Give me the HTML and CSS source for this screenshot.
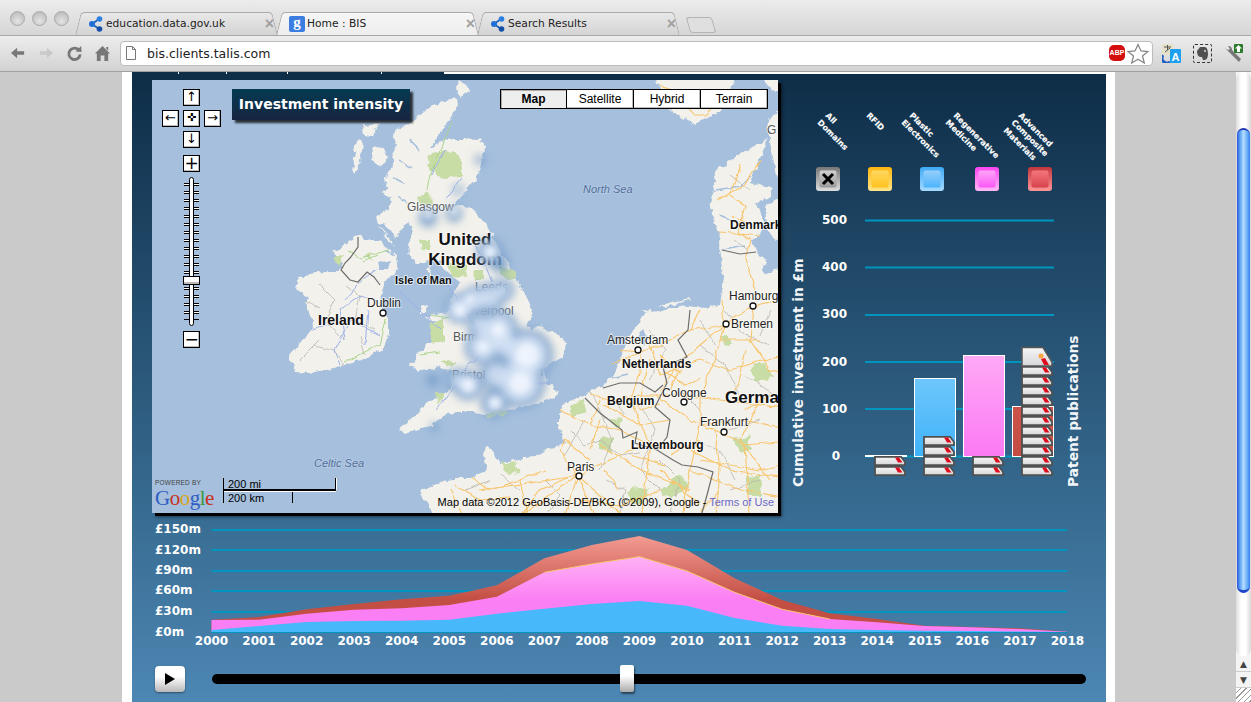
FILE: index.html
```html
<!DOCTYPE html>
<html lang="en">
<head>
<meta charset="utf-8">
<title>Home : BIS</title>
<link rel="stylesheet" href="styles.css">
</head>
<body>
<svg class="defs" width="0" height="0" aria-hidden="true">
  <defs>
    <symbol id="net" viewBox="0 0 16 16">
      <path d="M4 8 L11 3 M4 8 L11 13" stroke="#1a5fc0" stroke-width="1.6" fill="none"/>
      <circle cx="4" cy="8" r="3" fill="#1f6fd6"/><circle cx="11.5" cy="3" r="2.8" fill="#2a7fe0"/><circle cx="11.5" cy="13" r="2.8" fill="#1450a8"/>
    </symbol>
    <linearGradient id="pieceFill" x1="0" y1="0" x2="0" y2="1"><stop offset="0" stop-color="#f6f6f6"/><stop offset="1" stop-color="#d6d6da"/></linearGradient>
    <linearGradient id="blueBar" x1="0" y1="0" x2="0" y2="1"><stop offset="0" stop-color="#6ec6fb"/><stop offset="1" stop-color="#3fb3f9"/></linearGradient>
    <linearGradient id="pinkBar" x1="0" y1="0" x2="0" y2="1"><stop offset="0" stop-color="#ffa9f6"/><stop offset="1" stop-color="#fb7af3"/></linearGradient>
    <linearGradient id="redBar" x1="0" y1="0" x2="0" y2="1"><stop offset="0" stop-color="#cc534a"/><stop offset="1" stop-color="#c24c44"/></linearGradient>
    <linearGradient id="grayO" x1="0" y1="0" x2="0" y2="1"><stop offset="0" stop-color="#777"/><stop offset="1" stop-color="#ddd"/></linearGradient>
    <linearGradient id="grayI" x1="0" y1="0" x2="0" y2="1"><stop offset="0" stop-color="#d0d0d0"/><stop offset="1" stop-color="#999"/></linearGradient>
    <linearGradient id="yelO" x1="0" y1="0" x2="0" y2="1"><stop offset="0" stop-color="#fdb510"/><stop offset="1" stop-color="#ffe58a"/></linearGradient>
    <linearGradient id="yelI" x1="0" y1="0" x2="0" y2="1"><stop offset="0" stop-color="#ffd860"/><stop offset="1" stop-color="#ffc21f"/></linearGradient>
    <linearGradient id="bluO" x1="0" y1="0" x2="0" y2="1"><stop offset="0" stop-color="#3ea9f4"/><stop offset="1" stop-color="#a6daff"/></linearGradient>
    <linearGradient id="bluI" x1="0" y1="0" x2="0" y2="1"><stop offset="0" stop-color="#94cffb"/><stop offset="1" stop-color="#4db4fc"/></linearGradient>
    <linearGradient id="pnkO" x1="0" y1="0" x2="0" y2="1"><stop offset="0" stop-color="#fb45f0"/><stop offset="1" stop-color="#ffb8f6"/></linearGradient>
    <linearGradient id="pnkI" x1="0" y1="0" x2="0" y2="1"><stop offset="0" stop-color="#ffa4f8"/><stop offset="1" stop-color="#fb58f5"/></linearGradient>
    <linearGradient id="redO" x1="0" y1="0" x2="0" y2="1"><stop offset="0" stop-color="#c4343c"/><stop offset="1" stop-color="#fb9599"/></linearGradient>
    <linearGradient id="redI" x1="0" y1="0" x2="0" y2="1"><stop offset="0" stop-color="#f3767d"/><stop offset="1" stop-color="#d8434c"/></linearGradient>
    <linearGradient id="areaRed" gradientUnits="userSpaceOnUse" x1="0" y1="536" x2="0" y2="600"><stop offset="0" stop-color="#f39b92"/><stop offset="1" stop-color="#c34e43"/></linearGradient>
    <linearGradient id="areaPink" gradientUnits="userSpaceOnUse" x1="0" y1="556" x2="0" y2="600"><stop offset="0" stop-color="#ffb2f6"/><stop offset="1" stop-color="#fb7ff4"/></linearGradient>
    <symbol id="piece" viewBox="0 0 32 10">
      <path d="M1 .8 H27 L31 6 V9.200 H1 Z" fill="url(#pieceFill)" stroke="#505050" stroke-width="1.800"/>
      <path d="M21 1.500 H25 L28.500 6.500 H24 Z" fill="#e00d1e"/>
    </symbol>
    <filter id="rough" filterUnits="userSpaceOnUse" x="130" y="60" width="680" height="480">
      <feTurbulence type="fractalNoise" baseFrequency="0.14" numOctaves="3" seed="7"/>
      <feDisplacementMap in="SourceGraphic" scale="7" xChannelSelector="R" yChannelSelector="G"/>
    </filter>
    <filter id="wiggle" filterUnits="userSpaceOnUse" x="130" y="60" width="680" height="480">
      <feTurbulence type="fractalNoise" baseFrequency="0.09" numOctaves="2" seed="3"/>
      <feDisplacementMap in="SourceGraphic" scale="5" xChannelSelector="R" yChannelSelector="G"/>
    </filter>
    <filter id="softGreen" filterUnits="userSpaceOnUse" x="130" y="60" width="680" height="480">
      <feTurbulence type="fractalNoise" baseFrequency="0.1" numOctaves="3" seed="11"/>
      <feDisplacementMap in="SourceGraphic" scale="9" xChannelSelector="R" yChannelSelector="G"/>
      <feGaussianBlur stdDeviation=".5"/>
    </filter>
    <filter id="blurHalo" filterUnits="userSpaceOnUse" x="380" y="120" width="240" height="340"><feGaussianBlur stdDeviation="5"/></filter>
    <filter id="blurMid" filterUnits="userSpaceOnUse" x="380" y="120" width="240" height="340"><feGaussianBlur stdDeviation="4.500"/></filter>
    <filter id="blurCore" filterUnits="userSpaceOnUse" x="380" y="120" width="240" height="340"><feGaussianBlur stdDeviation="3"/></filter>
  </defs>
</svg>

<header class="tabstrip">
  <div class="lights"><i class="light"></i><i class="light"></i><i class="light"></i></div>
  <div class="tab">
    <svg class="favicon"><use href="#net"/></svg>
    <span class="tab-title">education.data.gov.uk</span><span class="tab-close">×</span>
  </div>
  <div class="tab tab-active">
    <span class="g-favicon">g</span>
    <span class="tab-title">Home : BIS</span><span class="tab-close">×</span>
  </div>
  <div class="tab">
    <svg class="favicon"><use href="#net"/></svg>
    <span class="tab-title">Search Results</span><span class="tab-close">×</span>
  </div>
  <div class="tab-new"></div>
</header>

<nav class="toolbar">
  <span class="tool"><svg width="16" height="14" viewBox="0 0 18 16"><path d="M1 8 L8 2 V6 H16 V10 H8 V14 Z" fill="#777"/></svg></span>
  <span class="tool"><svg width="16" height="14" viewBox="0 0 18 16"><path d="M17 8 L10 2 V6 H2 V10 H10 V14 Z" fill="#c9c9c9"/></svg></span>
  <span class="tool"><svg width="17" height="17" viewBox="0 0 18 18"><path d="M14 6 A6 6 0 1 0 15 10" fill="none" stroke="#777" stroke-width="3"/><path d="M10 7 L16.500 7.500 L16 1 Z" fill="#777"/></svg></span>
  <span class="tool"><svg width="17" height="17" viewBox="0 0 18 18"><path d="M9 1 L17 9 H15 V17 H11 V11 H7 V17 H3 V9 H1 Z M13 2 H15 V6 L13 4 Z" fill="#777"/></svg></span>
  <div class="omnibox">
    <svg width="10" height="14" viewBox="0 0 10 14"><path d="M.5 .5 H6.500 L9.500 3.500 V13.500 H.5 Z M6.500 .5 V3.500 H9.500" fill="#fff" stroke="#777"/></svg>
    <span class="url">bis.clients.talis.com</span>
    <span class="abp">ABP</span>
    <svg width="22" height="21" viewBox="0 0 22 21"><path d="M11 1.500 L14 8 L21 8.500 L15.500 13 L17.300 20 L11 16.300 L4.700 20 L6.500 13 L1 8.500 L8 8 Z" fill="#fff" stroke="#888" stroke-width="1.300"/></svg>
  </div>
  <div class="extensions">
    <svg width="19" height="19" viewBox="0 0 19 19"><rect x="0" y="0" width="11" height="11" fill="#e6e0c8"/><path d="M2 3 H9 M5.500 1 V6 M3 8 L8 4" stroke="#555" fill="none"/><path d="M1 11 A5 5 0 0 0 8 18" stroke="#1d5fc4" stroke-width="3" fill="none"/><rect x="8" y="5" width="11" height="14" rx="1" fill="#1fa0ee"/><text class="ext-a" x="13.500" y="16.500">A</text></svg>
    <span class="ever"><svg width="15" height="15" viewBox="0 0 15 15"><path d="M2 5 L5 1 H10 Q13 2 13 8 Q13 13 10 14 H8 L7 11 L5 11 Q2 10 2 5 Z" fill="#505050"/><circle cx="10" cy="5" r="1" fill="#ddd"/></svg></span>
    <svg width="19" height="19" viewBox="0 0 19 19"><path d="M1 4 L5 8 L12 15 L15 18 L17 15 L8 6 Q8 2 4 2 L6 5 L4 6 Z" fill="#777"/><rect x="10" y="0" width="9" height="9" rx="1" fill="#2d7a2d"/><path d="M14.500 1 L18 4.500 H16 V8 H13 V4.500 H11 Z" fill="#fff"/></svg>
  </div>
</nav>

<div class="viewport">
  <div class="gutter-left"></div>
  <main class="page">
    <div class="subnav"><span class="subnav-a"></span><span class="subnav-b"></span><span class="subnav-c"></span><span class="subnav-d"></span><span class="subnav-e"></span></div>
    <section class="panel">
      <div class="top-row">
        <div class="map">
          <svg class="map-canvas" width="626" height="433" viewBox="152 80 626 433">
            <rect x="152" y="80" width="626" height="433" fill="#a5bfdd"/>
            <g class="land" filter="url(#rough)">
              <path d="M447 100 L457 98 L458 105 L452 116 L444 128 L436 138 L431 148 L442 142 L452 139 L466 139 L478 140 L485 146 L484 156 L481 168 L474 180 L466 190 L460 198 L452 206 L462 205 L470 208 L478 216 L486 224 L492 234 L497 246 L505 258 L512 270 L518 282 L522 288 L526 296 L533 310 L528 322 L530 330 L538 326 L546 328 L560 335 L566 344 L563 356 L552 362 L542 370 L546 378 L548 384 L558 390 L556 397 L540 402 L520 407 L504 412 L488 416 L472 412 L456 412 L442 415 L432 426 L420 428 L406 433 L398 430 L405 424 L416 414 L428 402 L440 396 L450 388 L456 380 L460 372 L448 370 L436 368 L420 370 L410 366 L416 358 L424 348 L432 340 L440 330 L442 322 L432 321 L426 316 L438 314 L446 312 L452 306 L451 298 L456 290 L461 283 L452 276 L446 270 L440 262 L436 258 L424 262 L417 264 L410 256 L408 246 L413 232 L410 222 L404 226 L396 238 L391 232 L386 225 L376 222 L378 216 L388 208 L392 200 L382 192 L388 188 L384 180 L388 172 L394 165 L392 156 L398 146 L393 136 L396 130 L406 126 L414 120 L424 112 L436 103 Z"/>
              <path d="M358 235 L350 240 L342 246 L333 252 L338 256 L343 263 L338 272 L324 272 L310 274 L299 277 L297 288 L308 298 L306 304 L312 316 L314 325 L308 335 L300 342 L288 356 L294 362 L296 372 L310 373 L326 370 L340 366 L356 362 L372 355 L384 347 L388 335 L388 322 L384 312 L380 305 L382 288 L388 278 L398 268 L395 254 L386 248 L378 240 L366 240 Z"/>
              <path d="M767 138 L758 145 L745 152 L730 160 L718 170 L713 182 L714 195 L710 207 L714 220 L720 232 L719 243 L722 255 L721 268 L724 280 L722 292 L720 305 L705 308 L688 306 L672 308 L660 311 L647 312 L636 326 L630 334 L624 350 L617 370 L603 385 L580 397 L562 404 L558 415 L558 428 L566 442 L552 448 L538 454 L520 460 L500 463 L494 452 L486 446 L484 455 L487 470 L472 478 L455 478 L440 483 L420 490 L424 500 L432 508 L430 540 L810 540 L810 268 L778 268 L770 274 L762 272 L766 260 L758 252 L752 242 L760 232 L764 222 L760 212 L756 204 L770 196 L773 188 L760 186 L750 182 L756 168 L762 155 Z"/>
              <path d="M655 70 L660 92 L668 108 L682 118 L695 124 L706 118 L720 112 L728 98 L737 70 Z"/>
              <path d="M758 70 L770 88 L778 92 L800 92 L800 70 Z M768 120 L778 112 L800 112 L800 178 L778 178 L772 160 Z M766 205 L778 200 L800 200 L800 240 L778 240 L768 232 Z"/>
              <path d="M458 81 L466 84 L470 92 L462 96 L456 90 Z M363 125 L380 123 L372 136 L364 135 Z M357 140 L363 142 L361 160 L355 173 L352 170 Z M373 148 L383 146 L388 158 L380 168 L372 160 Z M378 225 L384 232 L390 238 L394 246 L388 240 Z M427 270 L431 266 L430 276 Z M420 307 L428 305 L427 313 L420 314 Z M640 310 L652 308 L650 312 Z M658 306 L672 302 L690 298 L688 300 L665 307 Z"/>
            </g>
            <g class="green" filter="url(#softGreen)">
              <path d="M428 156 L446 150 L462 160 L462 176 L444 178 L430 172 Z"/>
              <path d="M417 196 L430 192 L431 204 L418 205 Z M420 240 L430 240 L430 250 L422 250 Z M447 263 L466 264 L468 278 L452 276 Z M473 270 L484 270 L484 280 L475 280 Z M500 262 L514 272 L510 280 L500 274 Z"/>
              <path d="M430 322 L444 320 L444 342 L433 344 Z M441 362 L456 360 L450 368 Z M434 394 L444 394 L440 402 Z"/>
              <path d="M333 258 L342 256 L340 266 Z M365 255 L372 252 L372 260 Z"/>
              <path d="M486 415 L503 407 L508 412 L490 418 Z M500 462 L516 462 L520 470 L508 476 Z M610 420 L622 418 L618 428 Z M660 490 L680 474 L690 488 L672 498 Z M630 490 L648 488 L644 506 L628 504 Z M570 405 L584 400 L586 412 L572 416 Z M750 370 L766 362 L772 378 L754 382 Z M735 440 L748 436 L752 450 L738 450 Z M745 478 L760 475 L762 495 L748 495 Z M600 440 L612 436 L612 452 L600 450 Z M720 335 L730 335 L730 345 L722 345 Z"/>
            </g>
            <g class="water" filter="url(#wiggle)">
              <path d="M378 263 L390 260 L388 270 L380 270 Z M635 340 L642 330 L648 336 L644 346 Z"/>
              <path class="sliver" d="M716 190 L740 186 L752 176 M410 140 L420 150 M400 160 L412 168 M392 178 L404 184 M398 196 L408 204 M640 362 L622 365 M628 374 L612 378 M720 215 L734 222 M724 250 L745 246 M386 250 L396 256"/>
            </g>
            <g filter="url(#wiggle)">
              <g class="minor">
                <path d="M570 430 L585 445 L600 440 L620 455 L640 452 M600 413 L612 440 L600 470 M585 420 L565 455 M640 405 L655 430 L640 470 L660 490 M590 392 L605 420 M610 395 L625 415 M650 330 L665 350 L650 380 M680 390 L700 410 M690 440 L720 450 L735 480 M660 460 L680 480 L670 513 M700 345 L725 365 L740 395 M725 310 L745 335 L770 345 M770 310 L760 335 M700 320 L715 345 M745 375 L775 395 M725 430 L760 420 M730 490 L760 480 M605 480 L625 490 L620 513 M545 480 L560 495 L548 513 M500 475 L520 490 M465 490 L490 480 M735 240 L748 250 M730 175 L750 190"/>
                <path d="M345 285 L360 295 L355 320 L375 330 M320 285 L335 300 L325 320 L345 340 M315 345 L335 350 L345 365 M300 360 L320 340 M360 335 L365 355 M305 300 L320 308"/>
              </g>
              <g class="road">
                <path d="M560 410 L590 425 L620 430 L650 445 L690 450 L730 470 L800 480"/>
                <path d="M510 530 L540 490 L575 475 L610 460 L640 445"/>
                <path d="M578 476 L560 450 L565 440 M578 476 L600 530 M578 476 L640 530 M578 476 L500 530 M578 476 L560 530 M578 476 L480 490"/>
                <path d="M590 395 L610 400 L640 395 L680 395 L720 400 L800 410"/>
                <path d="M620 350 L638 352 L660 345 L690 330 L724 325 L753 306 L800 295"/>
                <path d="M612 365 L640 352 L640 375 L630 400 L650 445 L640 530"/>
                <path d="M655 395 L690 420 L715 430 L720 470 L715 530"/>
                <path d="M724 325 L715 360 L700 395 L700 425 L690 470 L680 530"/>
                <path d="M753 306 L750 340 L770 370 L800 380 M724 325 L700 345 L680 362 L660 392"/>
                <path d="M715 430 L745 445 L800 440 M700 425 L740 420 L800 430 M745 445 L750 530 M690 470 L740 490 L800 500"/>
                <path d="M470 478 L490 490 L520 480 L545 470 M455 485 L480 500 L510 498 M520 480 L530 530 M450 490 L470 530"/>
                <path d="M650 345 L660 375 L700 360 L730 370 L800 350 M690 330 L700 310 M724 325 L722 300"/>
                <path d="M740 165 L730 195 L745 205 L738 232 L750 240 L745 260 L755 290 M760 160 L745 185 L718 200 M720 232 L760 236 M732 215 L750 225"/>
                <path d="M675 95 L695 115 L705 115 L725 95 M660 85 L700 105"/>
                <path d="M605 405 L640 425 L670 420 M600 445 L640 470 L690 490 M565 440 L590 460 M660 470 L700 505 M640 395 L650 360 M580 500 L620 505 L660 490 M600 420 L590 450 M700 460 L760 470 L800 460 M760 400 L740 440 L770 480"/>
                <path d="M665 372 L685 385 L700 378 M678 372 L670 392 M660 355 L680 372 L690 360 M625 395 L640 410 L660 405 M600 400 L590 425 M720 340 L760 340 M745 350 L735 395 M770 395 L745 410 M720 490 L700 513 M605 470 L620 490 M630 455 L665 465 M700 440 L670 455"/>
              </g>
              <g class="river">
                <path d="M470 236 L484 262 L492 282 M436 270 L458 300 L476 330 L500 372 M460 372 L480 356 L500 352 M500 374 L530 384 L548 384 M400 292 L440 330 M460 380 L436 410 M445 150 L432 175 M462 178 L445 200"/>
                <path d="M378 268 L362 280 L345 300 M388 305 L360 295 L340 310 L345 340 M380 335 L350 320 L335 350 L340 365 M368 310 L365 345 M330 325 L312 330"/>
              </g>
              <g class="green-road">
                <path d="M452 120 L445 140 L432 170 L428 190 M362 262 L378 255 M348 250 L360 258 L390 250 M386 320 L380 345 L345 362 M420 355 L440 352 M430 315 L450 318"/>
              </g>
            </g>
            <g class="border">
              <path d="M358 237 L358 247 L350 258 L345 263 L341 270 L350 280 L358 282 L367 272 L374 277 L380 285"/>
              <path d="M603 388 L620 383 L640 383 L655 392 L663 385 M585 398 L600 413 L622 430 L623 438 L637 432 L635 443 L657 450 L673 460 L682 465 L698 467 L713 472 L707 495 L700 520 M690 310 L688 330 L678 340 L687 357 L663 367 L667 383 L655 407 L670 420 L667 437 L657 450 M722 250 L740 254 L756 252"/>
            </g>
            <g class="labels">
              <text class="lbl sea" x="583" y="193">North Sea</text>
              <text class="lbl sea" x="314" y="467">Celtic Sea</text>
              <text class="lbl bold12" x="730" y="229">Denmark</text>
              <text class="lbl city" x="729" y="300">Hamburg</text>
              <text class="lbl city" x="731" y="328">Bremen</text>
              <text class="lbl gray" x="767" y="134">G</text>
              <text class="lbl gray" x="407" y="211">Glasgow</text>
              <text class="lbl bold16 mid" x="465" y="245">United</text>
              <text class="lbl bold16 mid" x="465" y="265">Kingdom</text>
              <text class="lbl bold10" x="395" y="284">Isle of Man</text>
              <text class="lbl city" x="367" y="307">Dublin</text>
              <text class="lbl bold13" x="318" y="325">Ireland</text>
              <text class="lbl gray" x="475" y="291">Leeds</text>
              <text class="lbl gray" x="465" y="315">Liverpool</text>
              <text class="lbl gray" x="453" y="341">Birmingham</text>
              <text class="lbl gray" x="452" y="379">Bristol</text>
              <text class="lbl gray" x="503" y="376">London</text>
              <text class="lbl city" x="607" y="344">Amsterdam</text>
              <text class="lbl bold12" x="622" y="368">Netherlands</text>
              <text class="lbl bold12" x="607" y="405">Belgium</text>
              <text class="lbl city" x="662" y="397">Cologne</text>
              <text class="lbl bold16" x="725" y="403">Germa</text>
              <text class="lbl city" x="700" y="426">Frankfurt</text>
              <text class="lbl bold12" x="631" y="449">Luxembourg</text>
              <text class="lbl city" x="567" y="471">Paris</text>
              <circle class="dot" cx="383" cy="313" r="3"/>
              <circle class="dot" cx="638" cy="350" r="3"/>
              <circle class="dot" cx="753" cy="306" r="3"/>
              <circle class="dot" cx="726" cy="324" r="3"/>
              <circle class="dot" cx="579" cy="476" r="3"/>
              <circle class="dot" cx="684" cy="402" r="3"/>
              <circle class="dot" cx="724" cy="432" r="3"/>
            </g>
            <g class="halo" filter="url(#blurHalo)">
              <circle cx="428" cy="218" r="9"/><circle cx="454" cy="214" r="8"/><circle cx="480" cy="160" r="5"/><circle cx="458" cy="190" r="5"/>
              <circle cx="490" cy="252" r="13"/><circle cx="500" cy="264" r="9"/><circle cx="503" cy="290" r="11"/>
              <circle cx="490" cy="297" r="14"/><circle cx="477" cy="300" r="14"/><circle cx="460" cy="308" r="15"/>
              <circle cx="498" cy="330" r="20"/><circle cx="483" cy="347" r="18"/><circle cx="527" cy="355" r="26"/>
              <circle cx="520" cy="383" r="25"/><circle cx="468" cy="385" r="15"/><circle cx="495" cy="403" r="14"/>
              <circle cx="457" cy="380" r="11"/><circle cx="497" cy="375" r="16"/><circle cx="433" cy="380" r="6"/>
              <circle cx="505" cy="345" r="15"/><circle cx="480" cy="325" r="12"/><circle cx="434" cy="427" r="4"/>
            </g>
            <g class="mid-heat" filter="url(#blurMid)">
              <circle cx="490" cy="252" r="8"/><circle cx="503" cy="290" r="7"/>
              <circle cx="490" cy="297" r="11"/><circle cx="475" cy="300" r="11"/><circle cx="460" cy="308" r="12"/>
              <circle cx="498" cy="330" r="16"/><circle cx="483" cy="347" r="14"/><circle cx="527" cy="355" r="21"/>
              <circle cx="520" cy="383" r="20"/><circle cx="468" cy="385" r="11"/><circle cx="495" cy="403" r="9"/>
              <circle cx="457" cy="380" r="7"/><circle cx="497" cy="375" r="12"/><circle cx="505" cy="345" r="11"/><circle cx="480" cy="325" r="9"/>
            </g>
            <g class="core" filter="url(#blurCore)">
              <circle cx="428" cy="215" r="4"/><circle cx="454" cy="212" r="4"/><circle cx="458" cy="190" r="2"/>
              <circle cx="490" cy="252" r="5"/><circle cx="460" cy="310" r="6"/><circle cx="470" cy="299" r="4"/>
              <circle cx="498" cy="330" r="7"/><circle cx="483" cy="347" r="6"/><circle cx="527" cy="355" r="12"/>
              <circle cx="520" cy="383" r="11"/><circle cx="468" cy="385" r="6"/><circle cx="495" cy="403" r="5"/>
            </g>
          </svg>
          <div class="map-title">Investment intensity</div>
          <div class="map-types">
            <span class="map-type map-type-on">Map</span><span class="map-type">Satellite</span><span class="map-type">Hybrid</span><span class="map-type">Terrain</span>
          </div>
          <div class="map-nav">
            <span class="nav-btn nav-up">↑</span>
            <span class="nav-btn nav-left">←</span><span class="nav-btn nav-mid">✜</span><span class="nav-btn nav-right">→</span>
            <span class="nav-btn nav-down">↓</span>
            <span class="nav-btn nav-plus">+</span>
            <div class="zoom-rail"><span class="zoom-thumb"></span></div>
            <span class="nav-btn nav-minus">−</span>
          </div>
          <div class="map-logo">
            <span class="powered">POWERED BY</span>
            <span class="google"><b class="g-b">G</b><b class="g-r">o</b><b class="g-y">o</b><b class="g-b">g</b><b class="g-g">l</b><b class="g-r">e</b></span>
          </div>
          <div class="map-scale">
            <span class="scale-mi">200 mi</span>
            <span class="scale-km">200 km</span>
          </div>
          <div class="map-credit">Map data ©2012 GeoBasis-DE/BKG (©2009), Google - <span class="terms">Terms of Use</span></div>
        </div>
        <svg class="bar-chart" width="328" height="433" viewBox="778 80 328 433">
          <g class="domain">
            <text transform="rotate(45 825 116)" x="825" y="116">All</text>
            <text transform="rotate(45 817 123)" x="817" y="123">Domains</text>
            <text transform="rotate(45 866 116)" x="866" y="116">RFID</text>
            <text transform="rotate(45 909 116)" x="909" y="116">Plastic</text>
            <text transform="rotate(45 901 123)" x="901" y="123">Electronics</text>
            <text transform="rotate(45 953 116)" x="953" y="116">Regenerative</text>
            <text transform="rotate(45 945 123)" x="945" y="123">Medicine</text>
            <text transform="rotate(45 1018 116)" x="1018" y="116">Advanced</text>
            <text transform="rotate(45 1011 123)" x="1011" y="123">Composite</text>
            <text transform="rotate(45 1003 131)" x="1003" y="131">Materials</text>
          </g>
          <rect x="816" y="167" width="24" height="24" rx="3" fill="url(#grayO)"/><rect x="819.500" y="170.500" width="17" height="17" rx="2" fill="url(#grayI)"/>
          <path class="x-mark" d="M823 174 L833 184 M833 174 L823 184"/>
          <rect x="868" y="167" width="24" height="24" rx="3" fill="url(#yelO)"/><rect x="871.500" y="170.500" width="17" height="17" rx="2" fill="url(#yelI)"/>
          <rect x="920" y="167" width="24" height="24" rx="3" fill="url(#bluO)"/><rect x="923.500" y="170.500" width="17" height="17" rx="2" fill="url(#bluI)"/>
          <rect x="975" y="167" width="24" height="24" rx="3" fill="url(#pnkO)"/><rect x="978.500" y="170.500" width="17" height="17" rx="2" fill="url(#pnkI)"/>
          <rect x="1028" y="167" width="24" height="24" rx="3" fill="url(#redO)"/><rect x="1031.500" y="170.500" width="17" height="17" rx="2" fill="url(#redI)"/>
          <g class="grid">
            <path d="M865 220.500 H1054 M865 267.500 H1054 M865 315 H1054 M865 362 H1054 M865 409 H1054 M865 456.500 H1054"/>
          </g>
          <g class="axis">
            <text x="847" y="224">500</text><text x="847" y="271">400</text><text x="847" y="318">300</text><text x="847" y="366">200</text><text x="847" y="413">100</text><text x="840" y="460">0</text>
          </g>
          <text class="axis-title" transform="rotate(-90 803 487)" x="803" y="487">Cumulative investment in £m</text>
          <text class="axis-title" transform="rotate(-90 1078 487)" x="1078" y="487">Patent publications</text>
          <rect class="bar" x="865.500" y="455.500" width="41" height="1"/>
          <rect class="bar" x="914.500" y="378.500" width="41" height="78" fill="url(#blueBar)"/>
          <rect class="bar" x="963.500" y="355.500" width="41" height="101" fill="url(#pinkBar)"/>
          <rect class="bar" x="1012.500" y="406.500" width="41" height="50" fill="url(#redBar)"/>
          <use href="#piece" x="874" y="456" width="32" height="10"/><use href="#piece" x="874" y="466" width="32" height="10"/>
          <use href="#piece" x="923" y="436" width="32" height="10"/><use href="#piece" x="923" y="446" width="32" height="10"/><use href="#piece" x="923" y="456" width="32" height="10"/><use href="#piece" x="923" y="466" width="32" height="10"/>
          <use href="#piece" x="972" y="456" width="32" height="10"/><use href="#piece" x="972" y="466" width="32" height="10"/>
          <use href="#piece" x="1021" y="366" width="32" height="10"/><use href="#piece" x="1021" y="376" width="32" height="10"/><use href="#piece" x="1021" y="386" width="32" height="10"/><use href="#piece" x="1021" y="396" width="32" height="10"/><use href="#piece" x="1021" y="406" width="32" height="10"/><use href="#piece" x="1021" y="416" width="32" height="10"/><use href="#piece" x="1021" y="426" width="32" height="10"/><use href="#piece" x="1021" y="436" width="32" height="10"/><use href="#piece" x="1021" y="446" width="32" height="10"/><use href="#piece" x="1021" y="456" width="32" height="10"/><use href="#piece" x="1021" y="466" width="32" height="10"/>
          <path d="M1022 347.500 H1043 L1052 362 V366 H1022 Z" fill="url(#pieceFill)" stroke="#555" stroke-width="1.500"/>
          <path d="M1041 359 L1045 358 L1049 365 H1044 Z" fill="#e00d1e"/>
          <circle cx="1041" cy="356" r="2.500" fill="#f9a343"/>
        </svg>
      </div>
      <svg class="timeline" width="954" height="140" viewBox="152 515 954 140">
        <g class="grid">
          <path d="M211.500 530 H1067 M211.500 550 H1067 M211.500 571 H1067 M211.500 591 H1067 M211.500 612 H1067 M211.500 632 H1067"/>
        </g>
        <path d="M211.500 632 V619.700 L259 617 L306.600 609.300 L354.200 604 L401.700 599.300 L449.300 595.700 L496.800 585.300 L544.400 558.300 L591.900 545 L639.500 536 L687 550 L734.600 578.300 L782.100 600 L829.700 613.300 L877.200 619 L924.800 625.700 L972.300 627 L1019.900 628.300 L1067.400 631.700 V632 Z" fill="url(#areaRed)"/>
        <path d="M211.500 632 V620 L259 619.700 L306.600 613.700 L354.200 609.700 L401.700 608.300 L449.300 605 L496.800 596.700 L544.400 572.300 L591.900 564 L639.500 556.700 L687 571 L734.600 592.300 L782.100 609.300 L829.700 619 L877.200 622.300 L924.800 626 L972.300 627.300 L1019.900 629 L1067.400 631.700 V632 Z" fill="url(#areaPink)"/>
        <path class="area-edge" d="M544.400 572.300 L591.900 564 L639.500 556.700 L687 571 L734.600 592.300 L782.100 609.300 L829.700 619"/>
        <path d="M211.500 632 V630 L259 626 L306.600 622 L354.200 621 L401.700 620.700 L449.300 619.700 L496.800 613.700 L544.400 608.700 L591.900 604 L639.500 601 L687 605.700 L734.600 618 L782.100 625.700 L829.700 629 L877.200 630 L924.800 630.700 L972.300 631 L1019.900 631.500 L1067.400 632 Z" fill="#47b9fb"/>
        <g class="axis axis-money">
          <text x="155" y="533">£150m</text><text x="155" y="554">£120m</text><text x="155" y="574">£90m</text><text x="155" y="594">£60m</text><text x="155" y="615">£30m</text><text x="155" y="636">£0m</text>
        </g>
        <g class="axis axis-years">
          <text x="211.500" y="645">2000</text><text x="259" y="645">2001</text><text x="306.600" y="645">2002</text><text x="354.200" y="645">2003</text><text x="401.700" y="645">2004</text><text x="449.300" y="645">2005</text><text x="496.800" y="645">2006</text><text x="544.400" y="645">2007</text><text x="591.900" y="645">2008</text><text x="639.500" y="645">2009</text><text x="687" y="645">2010</text><text x="734.600" y="645">2011</text><text x="782.100" y="645">2012</text><text x="829.700" y="645">2013</text><text x="877.200" y="645">2014</text><text x="924.800" y="645">2015</text><text x="972.300" y="645">2016</text><text x="1019.900" y="645">2017</text><text x="1067.400" y="645">2018</text>
        </g>
      </svg>
      <div class="player">
        <span class="play"><i class="play-arrow"></i></span>
        <div class="track"><span class="thumb"></span></div>
      </div>
    </section>
  </main>
  <div class="gutter-right"></div>
  <aside class="scrollbar">
    <div class="scroll-track"><div class="scroll-thumb"></div></div>
    <span class="scroll-arrow">▲</span>
    <span class="scroll-arrow">▼</span>
    <span class="scroll-corner"></span>
  </aside>
</div>
</body>
</html>
```

FILE: styles.css
```css
* { box-sizing: border-box; }
html, body { margin: 0; padding: 0; }
body {
  width: 1251px; height: 702px; overflow: hidden;
  display: flex; flex-direction: column;
  font-family: "DejaVu Sans", sans-serif;
  background: #cacaca;
}
.defs { position: absolute; }

/* tab strip */
.tabstrip {
  height: 35px; flex: none;
  display: flex; align-items: flex-end;
  background: linear-gradient(#ececec, #d6d6d6);
}
.lights { width: 75px; height: 35px; display: flex; gap: 7px; padding: 11px 0 0 10px; flex: none; }
.light {
  width: 15px; height: 15px; border-radius: 50%;
  background: radial-gradient(circle at 50% 70%, #e4e4e4, #b4b4b4);
  border: 1px solid #a8a8a8;
}
.tab {
  position: relative; width: 203px; height: 23px; flex: none;
  margin-right: -2px;
  display: flex; align-items: center; gap: 2px;
  padding: 0 4px 0 13px;
  font-size: 10.700px; color: #222;
}
.tab::before, .tab::after {
  content: ""; position: absolute; top: 0; bottom: 0; width: 55%; z-index: 0;
  background: linear-gradient(#e8e8e8, #d4d4d4);
  border-top: 1px solid #aaa;
}
.tab::before { left: 3px; transform: skewX(-14deg); border-left: 1px solid #aaa; border-top-left-radius: 4px; }
.tab::after { right: 3px; transform: skewX(14deg); border-right: 1px solid #aaa; border-top-right-radius: 4px; }
.tab-active { z-index: 1; }
.tab-active::before, .tab-active::after { background: linear-gradient(#f6f6f6, #ededed); }
.tab > * { position: relative; z-index: 1; }
.favicon { width: 16px; height: 16px; flex: none; }
.g-favicon {
  width: 16px; height: 16px; flex: none; border-radius: 2px;
  background: #3b7de0; color: #fff;
  font: 700 15px/13px "Liberation Serif", serif; text-align: center;
}
.tab-title { flex: 1; white-space: nowrap; overflow: hidden; }
.tab-close { color: #a0a0a0; font: 700 16px/16px "Liberation Sans", sans-serif; }
.tab-new {
  width: 26px; height: 16px; margin: 0 0 2px 10px; flex: none;
  background: #dfdfdf; border: 1px solid #b4b4b4; border-radius: 3px;
  transform: skewX(16deg);
}

/* toolbar */
.toolbar {
  height: 37px; flex: none;
  display: flex; align-items: center;
  padding: 0 0 1px 4px;
  background: linear-gradient(#ededed, #d2d2d2);
  border-top: 1px solid #a8a8a8;
  border-bottom: 1px solid #a0a0a0;
}
.tool { width: 28px; display: flex; justify-content: center; flex: none; }
.omnibox {
  width: 1033px; height: 25px; margin-left: 4px; flex: none;
  display: flex; align-items: center;
  padding: 0 3px 0 5px;
  background: #fff; border: 1px solid #bcbcbc; border-radius: 4px;
}
.url { margin-left: 11px; flex: 1; font-size: 12.500px; color: #222; }
.abp {
  width: 16px; height: 16px; margin-right: 2px;
  background: #d40d0d; color: #fff; border-radius: 5px;
  font: 700 7px/16px "Liberation Sans", sans-serif; text-align: center;
}
.extensions { display: flex; align-items: center; gap: 12px; margin-left: 9px; }
.ext-a { font: 700 11px "Liberation Sans", sans-serif; fill: #fff; text-anchor: middle; }
.ever {
  width: 19px; height: 19px; display: flex; align-items: center; justify-content: center;
  border: 1px dashed #333; border-radius: 2px;
}

/* viewport */
.viewport { flex: 1; min-height: 0; display: flex; }
.gutter-left { width: 122px; flex: none; }
.gutter-right { width: 121px; flex: none; }
.page { width: 993px; flex: none; background: #fff; padding: 0 9px 0 10px; overflow: hidden; }
.subnav { height: 2px; display: flex; background: #fff; }
.subnav > span { background: #0f2f49; border-right: 1px solid #fff; }
.subnav-a { width: 47px; } .subnav-b { width: 48px; } .subnav-c { width: 61px; } .subnav-d { width: 94px; } .subnav-e { width: 63px; }

.panel {
  height: 630px; padding: 6px 0 0 20px;
  background: linear-gradient(#0e2d47 0, #386c92 70%, #4d87b4 100%);
}
.top-row { display: flex; height: 433px; }
.map {
  position: relative; width: 626px; height: 433px; flex: none;
  box-shadow: 3px 3px 0 #000, 4px 4px 3px rgba(0,0,0,.5);
  font-family: "Liberation Sans", sans-serif;
}
.map-canvas { display: block; }
.bar-chart { flex: none; margin-left: 0; }

/* map geography */
.land path { fill: #f3f1eb; }
.green path { fill: #c8dca6; }
.water path { fill: #a5bfdd; }
.water .sliver { fill: none; stroke: #a5bfdd; stroke-width: 1.500; }
.river path { fill: none; stroke: #9fb2ea; stroke-width: 1; }
.green-road path { fill: none; stroke: #a9d48c; stroke-width: 1; }
.minor path { fill: none; stroke: #b9b6ae; stroke-width: .8; }
.border path { fill: none; stroke: #6c6c6c; stroke-width: 1.200; }
.road path { fill: none; stroke: #f8c66f; stroke-width: 1.100; }
.halo circle { fill: #6d95c4; opacity: .85; }
.mid-heat circle { fill: #dbe7f8; opacity: .8; }
.core circle { fill: #f2f7ff; opacity: .9; }
.lbl {
  font-family: "Liberation Sans", sans-serif; font-size: 12px; fill: #111;
  paint-order: stroke; stroke: rgba(255,255,255,.6); stroke-width: 2px;
}
.sea { font-style: italic; font-size: 11px; fill: #566f99; stroke: rgba(190,210,235,.5); }
.city { font-size: 12px; fill: #222; }
.gray { font-size: 12px; fill: #555; }
.bold10 { font-size: 11px; font-weight: 700; }
.bold12 { font-size: 12px; font-weight: 700; }
.bold13 { font-size: 14px; font-weight: 700; }
.bold16 { font-size: 17px; font-weight: 700; }
.mid { text-anchor: middle; }
.dot { fill: #fff; stroke: #111; stroke-width: 1.300; }

/* map overlays */
.map-title {
  position: absolute; left: 80px; top: 9px; width: 178px; height: 31px;
  background: linear-gradient(#053a52, #172540);
  box-shadow: 3px 3px 2px rgba(0,0,0,.75);
  color: #fff; font: 700 14px/31px "DejaVu Sans", sans-serif; text-align: center;
}
.map-types { position: absolute; left: 348px; top: 9px; display: flex; }
.map-type {
  width: 67px; height: 20px;
  background: #fff; border: 1px solid #000;
  box-shadow: inset -1px -1px 0 #bbb;
  font-size: 12px; line-height: 18px; text-align: center; color: #000;
}
.map-type + .map-type { border-left: 0; }
.map-type-on { background: #eee; font-weight: 700; box-shadow: inset 1px 1px 0 #aaa; }

.map-nav { position: absolute; left: 0; top: 0; width: 80px; height: 280px; z-index: 1; }
.nav-btn {
  position: absolute; width: 17px; height: 17px;
  background: #fff; border: 1px solid #000;
  box-shadow: inset -1px -1px 0 #bbb;
  font: 13px/14px "DejaVu Sans", sans-serif; text-align: center; color: #000;
}
.nav-up { left: 31px; top: 9px; }
.nav-left { left: 10px; top: 30px; }
.nav-mid { left: 31px; top: 30px; font-size: 11px; }
.nav-right { left: 52px; top: 30px; }
.nav-down { left: 31px; top: 51px; }
.nav-plus { left: 31px; top: 75px; font-size: 17px; }
.nav-minus { left: 31px; top: 251px; font-size: 17px; }
.zoom-rail {
  position: absolute; left: 37px; top: 97px; width: 5px; height: 149px;
  background: #fff; border: 1px solid #000; border-radius: 3px;
}
.zoom-rail::before {
  content: ""; position: absolute; z-index: -1; left: -6px; top: 5px; width: 15px; height: 137px;
  background: repeating-linear-gradient(#000 0, #000 1px, #fff 1px, #fff 2px, #000 2px, #000 3px, transparent 3px, transparent 8px);
}
.zoom-thumb {
  position: absolute; left: -7px; top: 98px; width: 17px; height: 9px;
  background: #fff; border: 1px solid #000; box-shadow: inset 0 -2px 0 #bbb;
}
.map-logo { position: absolute; left: 3px; top: 400px; display: flex; flex-direction: column; line-height: 1; }
.powered { font-size: 6.500px; color: #444; letter-spacing: .2px; }
.google { font: 700 21px/22px "Liberation Serif", serif; letter-spacing: -.5px; }
.google b { font-weight: 400; }
.g-b { color: #2f5ec4; } .g-r { color: #c8321e; } .g-y { color: #d9a520; } .g-g { color: #3b9a3b; }
.map-scale {
  position: absolute; left: 71px; top: 398px; width: 113px; height: 25px;
  font-size: 11px; color: #000;
  border-left: 1px solid #000;
}
.map-scale::before {
  content: ""; position: absolute; left: 0; top: 11px; width: 112px; height: 2px;
  background: #000; box-shadow: 0 1px 0 #fff;
}
.map-scale::after {
  content: ""; position: absolute; right: 0; top: 0; width: 1px; height: 12px; background: #000; box-shadow: 1px 0 0 #fff;
}
.scale-mi { position: absolute; left: 4px; top: 0; line-height: 12px; }
.scale-km { position: absolute; left: 4px; top: 14px; width: 65px; height: 11px; line-height: 12px; border-right: 1px solid #000; }
.map-credit {
  position: absolute; right: 4px; bottom: 4px;
  font-size: 11px; line-height: 13px; color: #000; white-space: nowrap;
}
.terms { color: #6a6acb; }

/* charts */
.domain text { font: 700 8px "DejaVu Sans", sans-serif; fill: #fff; stroke: #fff; stroke-width: .15px; }
.grid path { fill: none; stroke: #0095bf; stroke-width: 2; }
.axis text { font: 700 12px "DejaVu Sans", sans-serif; fill: #fff; text-anchor: end; }
.axis-money text { text-anchor: start; }
.axis-years text { text-anchor: middle; font-size: 12px; }
.axis-title { font: 700 13.800px "DejaVu Sans", sans-serif; fill: #f2f6f9; }
.bar { stroke: #fff; stroke-width: 1; }
.x-mark { stroke: #000; stroke-width: 3; fill: none; }
.area-edge { fill: none; stroke: #f8c66f; stroke-width: 1; }
.timeline { display: block; margin-top: 2px; }

/* player */
.player { display: flex; align-items: center; height: 28px; margin-top: 10px; padding-left: 3px; }
.play {
  width: 30px; height: 26px; flex: none;
  display: flex; align-items: center; justify-content: center;
  background: linear-gradient(#fff 40%, #b8b8b8);
  border-radius: 4px; box-shadow: 0 1px 2px rgba(0,0,0,.4);
}
.play-arrow { width: 0; height: 0; border-style: solid; border-width: 6px 0 6px 10px; border-color: transparent transparent transparent #000; }
.track { position: relative; width: 874px; height: 10px; margin-left: 27px; background: #000; border-radius: 5px; }
.thumb {
  position: absolute; left: 408px; top: -9px; width: 14px; height: 27px;
  background: linear-gradient(#fff 40%, #aaa); border-radius: 2px;
  box-shadow: 1px 2px 2px rgba(0,0,0,.5);
}

/* scrollbar */
.scrollbar { width: 15px; flex: none; display: flex; flex-direction: column; background: #f4f4f4; }
.scroll-track {
  height: 584px; flex: none; padding: 7px 1px 0;
  background: linear-gradient(90deg, #dcdcdc, #fff 35%, #fff 65%, #d8d8d8);
  border-radius: 7px 7px 7px 7px;
}
.scroll-thumb {
  height: 465px; margin-top: 49px; border-radius: 7px;
  background: linear-gradient(90deg, #2a53d6, #5aa0f5 22%, #b4dcff 50%, #6ab0f8 78%, #3a7cec);
  border-top: 2px solid #2236b4; border-bottom: 3px solid #1d46cc;
}
.scroll-arrow {
  height: 16px; flex: none; font: 9px/16px "DejaVu Sans", sans-serif; color: #444; text-align: center;
  border-bottom: 1px solid #ccc;
}
.scroll-corner {
  flex: 1; background: repeating-linear-gradient(135deg, #fff 0, #fff 3px, #999 3px, #999 4px);
}
```
